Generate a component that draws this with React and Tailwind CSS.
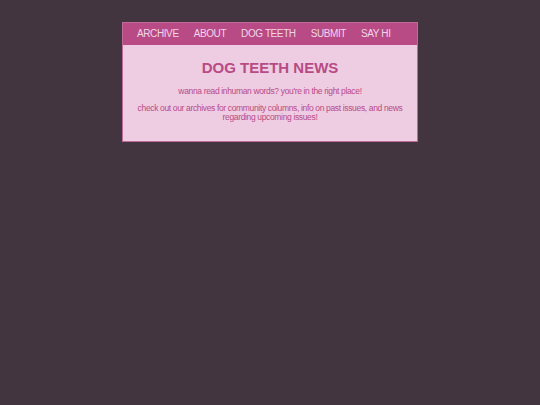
import React from 'react';

const links = ['ARCHIVE', 'ABOUT', 'DOG TEETH', 'SUBMIT', 'SAY HI'];

const App = () => {
  return (
    <div className="min-h-[405px] bg-[#433540] pt-[22px]" style={{ fontFamily: '"Liberation Sans", Arial, sans-serif' }}>
      <div className="mx-auto w-[296px] border border-[#c06a9a] bg-[#eecde3]">
        {/* nav */}
        <nav className="flex h-[22px] items-center gap-[15px] bg-[#b84a85] px-[14px]">
          {links.map((l) => (
            <a key={l} href="#" className="whitespace-nowrap text-[10px] leading-none tracking-[-0.4px] text-[#f3d6e8]">
              {l}
            </a>
          ))}
        </nav>

        <div className="px-[14px] pt-[14px] pb-[19px] text-center text-[#b84a85]">
          <h1 className="text-[15px] font-bold leading-[18px]">DOG TEETH NEWS</h1>
          <p className="mt-[9px] text-[8.5px] leading-[10px] tracking-[-0.35px]">wanna read inhuman words? you're in the right place!</p>
          <p className="mt-[8px] text-[8.5px] leading-[9px] tracking-[-0.35px]">
            check out our archives for community columns, info on past issues, and news regarding upcoming issues!
          </p>
        </div>
      </div>
    </div>
  );
};

export default App;
